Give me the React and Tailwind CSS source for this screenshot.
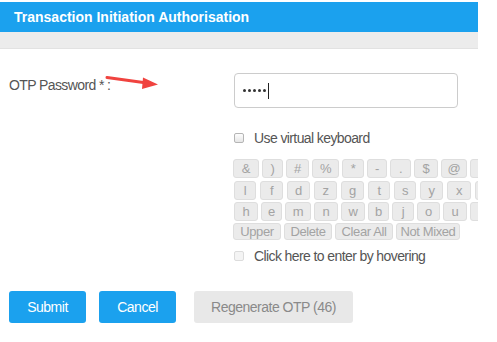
import React from 'react';

const rows = [
  [
    ['&', 'w-[26px]'], [')', 'w-[21px]'], ['#', 'w-[23px]'], ['%', 'w-[27px]'], ['*', 'w-[22px]'],
    ['-', 'w-[20px]'], ['.', 'w-[21px]'], ['$', 'w-[24px]'], ['@', 'w-[26px]'], ['', 'w-[24px]'],
  ],
  [
    ['l', 'w-[22px]'], ['f', 'w-[23px]'], ['d', 'w-[23px]'], ['z', 'w-[23px]'], ['g', 'w-[23px]'],
    ['t', 'w-[22px]'], ['s', 'w-[22px]'], ['y', 'w-[23px]'], ['x', 'w-[24px]'], ['', 'w-[24px]'],
  ],
  [
    ['h', 'w-[24px]'], ['e', 'w-[21px]'], ['m', 'w-[26px]'], ['n', 'w-[24px]'], ['w', 'w-[24px]'],
    ['b', 'w-[21px]'], ['j', 'w-[22px]'], ['o', 'w-[23px]'], ['u', 'w-[24px]'], ['', 'w-[24px]'],
  ],
];

const actions = [
  ['Upper', 'w-[48px]'],
  ['Delete', 'w-[48px]'],
  ['Clear All', 'w-[58px]'],
  ['Not Mixed', 'w-[64px]'],
];

function Key({ label, width, height = 'h-[19px]' }) {
  return (
    <div
      className={`${width} ${height} shrink-0 flex items-center justify-center rounded-[3px] border border-[#dedede] bg-[#ebebeb] text-[13px] text-[#a3a3a3] tracking-[-0.4px]`}
    >
      {label}
    </div>
  );
}

function Checkbox({ disabled }) {
  return (
    <div
      className={
        disabled
          ? 'w-[10px] h-[10px] rounded-[2px] border border-[#dcdcdc] bg-[#f4f4f4]'
          : 'w-[10px] h-[10px] rounded-[2px] border border-[#b5b5b5] bg-gradient-to-b from-[#fdfdfd] to-[#e6e6e6]'
      }
    />
  );
}

export default function App() {
  return (
    <div className="w-[478px] overflow-hidden bg-white font-['Liberation_Sans',Arial,sans-serif]">
      {/* Title bar */}
      <div className="mt-[2px] h-[30px] bg-[#1ba1ee] pl-[14px] flex items-center text-white font-bold text-[14px]">
        Transaction Initiation Authorisation
      </div>
      <div className="h-[17px] bg-[#ececec] border-b border-[#e2e2e2]" />

      {/* Form */}
      <div className="relative flex pt-[24px]">
        <div className="w-[234px] shrink-0 pl-[9px] pt-[4px] text-[14px] leading-[16px] text-[#555] tracking-[-0.6px]">
          OTP Password * :
        </div>

        <div className="flex flex-col">
          <div className="w-[224px] h-[35px] rounded-[4px] border border-[#cccccc] flex items-center pl-[8px]">
            <div className="flex gap-[2.5px]">
              <span className="w-[2.5px] h-[2.5px] rounded-full bg-[#333]" />
              <span className="w-[2.5px] h-[2.5px] rounded-full bg-[#333]" />
              <span className="w-[2.5px] h-[2.5px] rounded-full bg-[#333]" />
              <span className="w-[2.5px] h-[2.5px] rounded-full bg-[#333]" />
              <span className="w-[2.5px] h-[2.5px] rounded-full bg-[#333]" />
            </div>
            <span className="ml-[2px] w-[1px] h-[16px] bg-[#222]" />
          </div>

          <div className="mt-[22px] h-[16px] flex items-center gap-[10px] text-[14px] text-[#555] tracking-[-0.6px]">
            <Checkbox />
            <span>Use virtual keyboard</span>
          </div>

          {/* Virtual keyboard */}
          <div className="mt-[13px] -ml-[1px] flex flex-col">
            <div className="flex gap-[3px]">
              {rows[0].map(([k, w], i) => (
                <Key key={i} label={k} width={w} />
              ))}
            </div>
            <div className="mt-[3px] flex gap-[4px] ml-[1px]">
              {rows[1].map(([k, w], i) => (
                <Key key={i} label={k} width={w} />
              ))}
            </div>
            <div className="mt-[2px] flex gap-[3px] ml-[1px]">
              {rows[2].map(([k, w], i) => (
                <Key key={i} label={k} width={w} />
              ))}
            </div>
            <div className="mt-[2px] flex gap-[3px]">
              {actions.map(([k, w]) => (
                <Key key={k} label={k} width={w} height="h-[17px]" />
              ))}
            </div>
          </div>

          <div className="mt-[8px] h-[16px] flex items-center gap-[10px] text-[14px] text-[#555] tracking-[-0.6px]">
            <Checkbox disabled />
            <span>Click here to enter by hovering</span>
          </div>
        </div>

        {/* Red annotation arrow */}
        <svg className="absolute left-[105px] top-[26px]" width="56" height="16" viewBox="0 0 56 16">
          <path d="M2 2.5 L42 8" stroke="#f0433f" strokeWidth="3" strokeLinecap="round" fill="none" />
          <path d="M38 2.5 L53 9.5 L37 14 Z" fill="#f0433f" />
        </svg>
      </div>

      {/* Buttons */}
      <div className="mt-[27px] pl-[9px] pb-[19px] flex">
        <button className="w-[77px] h-[32px] rounded-[3px] bg-[#1ba1ee] text-white text-[14px] tracking-[-0.5px]">
          Submit
        </button>
        <button className="ml-[13px] w-[77px] h-[32px] rounded-[3px] bg-[#1ba1ee] text-white text-[14px] tracking-[-0.5px]">
          Cancel
        </button>
        <button className="ml-[18px] w-[159px] h-[32px] rounded-[3px] bg-[#e8e8e8] text-[#8a8a8a] text-[14px] tracking-[-0.5px]">
          Regenerate OTP (46)
        </button>
      </div>
    </div>
  );
}
